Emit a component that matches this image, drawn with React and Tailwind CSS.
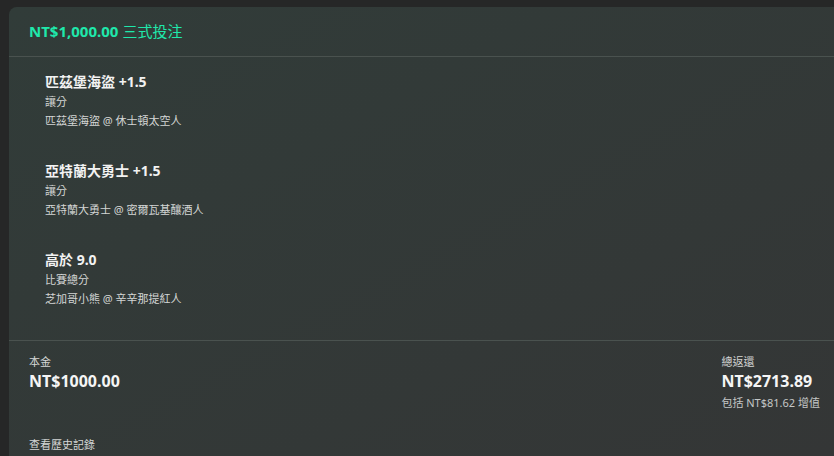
import React from "react";

const legs = [
  { pick: "匹茲堡海盜 +1.5", market: "讓分", match: "匹茲堡海盜 @ 休士頓太空人" },
  { pick: "亞特蘭大勇士 +1.5", market: "讓分", match: "亞特蘭大勇士 @ 密爾瓦基釀酒人" },
  { pick: "高於 9.0", market: "比賽總分", match: "芝加哥小熊 @ 辛辛那提紅人" },
];

const font = { fontFamily: "'Noto Sans', 'Noto Sans CJK TC', sans-serif" };

export default function App() {
  return (
    <div className="w-[834px] h-[456px] bg-[#262727] overflow-hidden pt-[7px] pl-[9px]" style={font}>
      <div className="h-full rounded-tl-lg bg-gradient-to-br from-[#313c39] to-[#343636] flex flex-col">
        {/* header */}
        <div className="h-[50px] shrink-0 flex items-center px-5 border-b border-[#4a524f] text-[15px] text-[#1fe8ab]">
          <span className="font-bold">NT$1,000.00</span>
          <span className="ml-1">三式投注</span>
        </div>

        {/* legs */}
        <div className="pl-9 pt-[14px] pb-[32px] flex flex-col gap-[30px] border-b border-[#4a524f]">
          {legs.map((leg) => (
            <div key={leg.pick} className="flex flex-col">
              <p className="text-[14px] leading-[22px] font-bold text-[#f2f2f2]">{leg.pick}</p>
              <p className="text-[11px] leading-[18px] text-[#d4d6d5]">{leg.market}</p>
              <p className="text-[11px] leading-[19px] text-[#d4d6d5]">{leg.match}</p>
            </div>
          ))}
        </div>

        {/* totals */}
        <div className="flex justify-between pl-5 pr-[14px] pt-[13px]">
          <div>
            <p className="text-[11px] leading-[16px] text-[#d4d6d5]">本金</p>
            <p className="text-[16px] leading-[22px] font-bold text-[#f5f5f5]">NT$1000.00</p>
          </div>
          <div>
            <p className="text-[11px] leading-[16px] text-[#d4d6d5]">總返還</p>
            <p className="text-[16px] leading-[22px] font-bold text-[#f5f5f5]">NT$2713.89</p>
            <p className="text-[11px] leading-[18px] text-[#c4c7c6] mt-[2px]">包括 NT$81.62 增值</p>
          </div>
        </div>

        <p className="pl-5 mt-[24px] text-[11px] leading-[18px] text-[#d4d6d5]">查看歷史記錄</p>
      </div>
    </div>
  );
}
